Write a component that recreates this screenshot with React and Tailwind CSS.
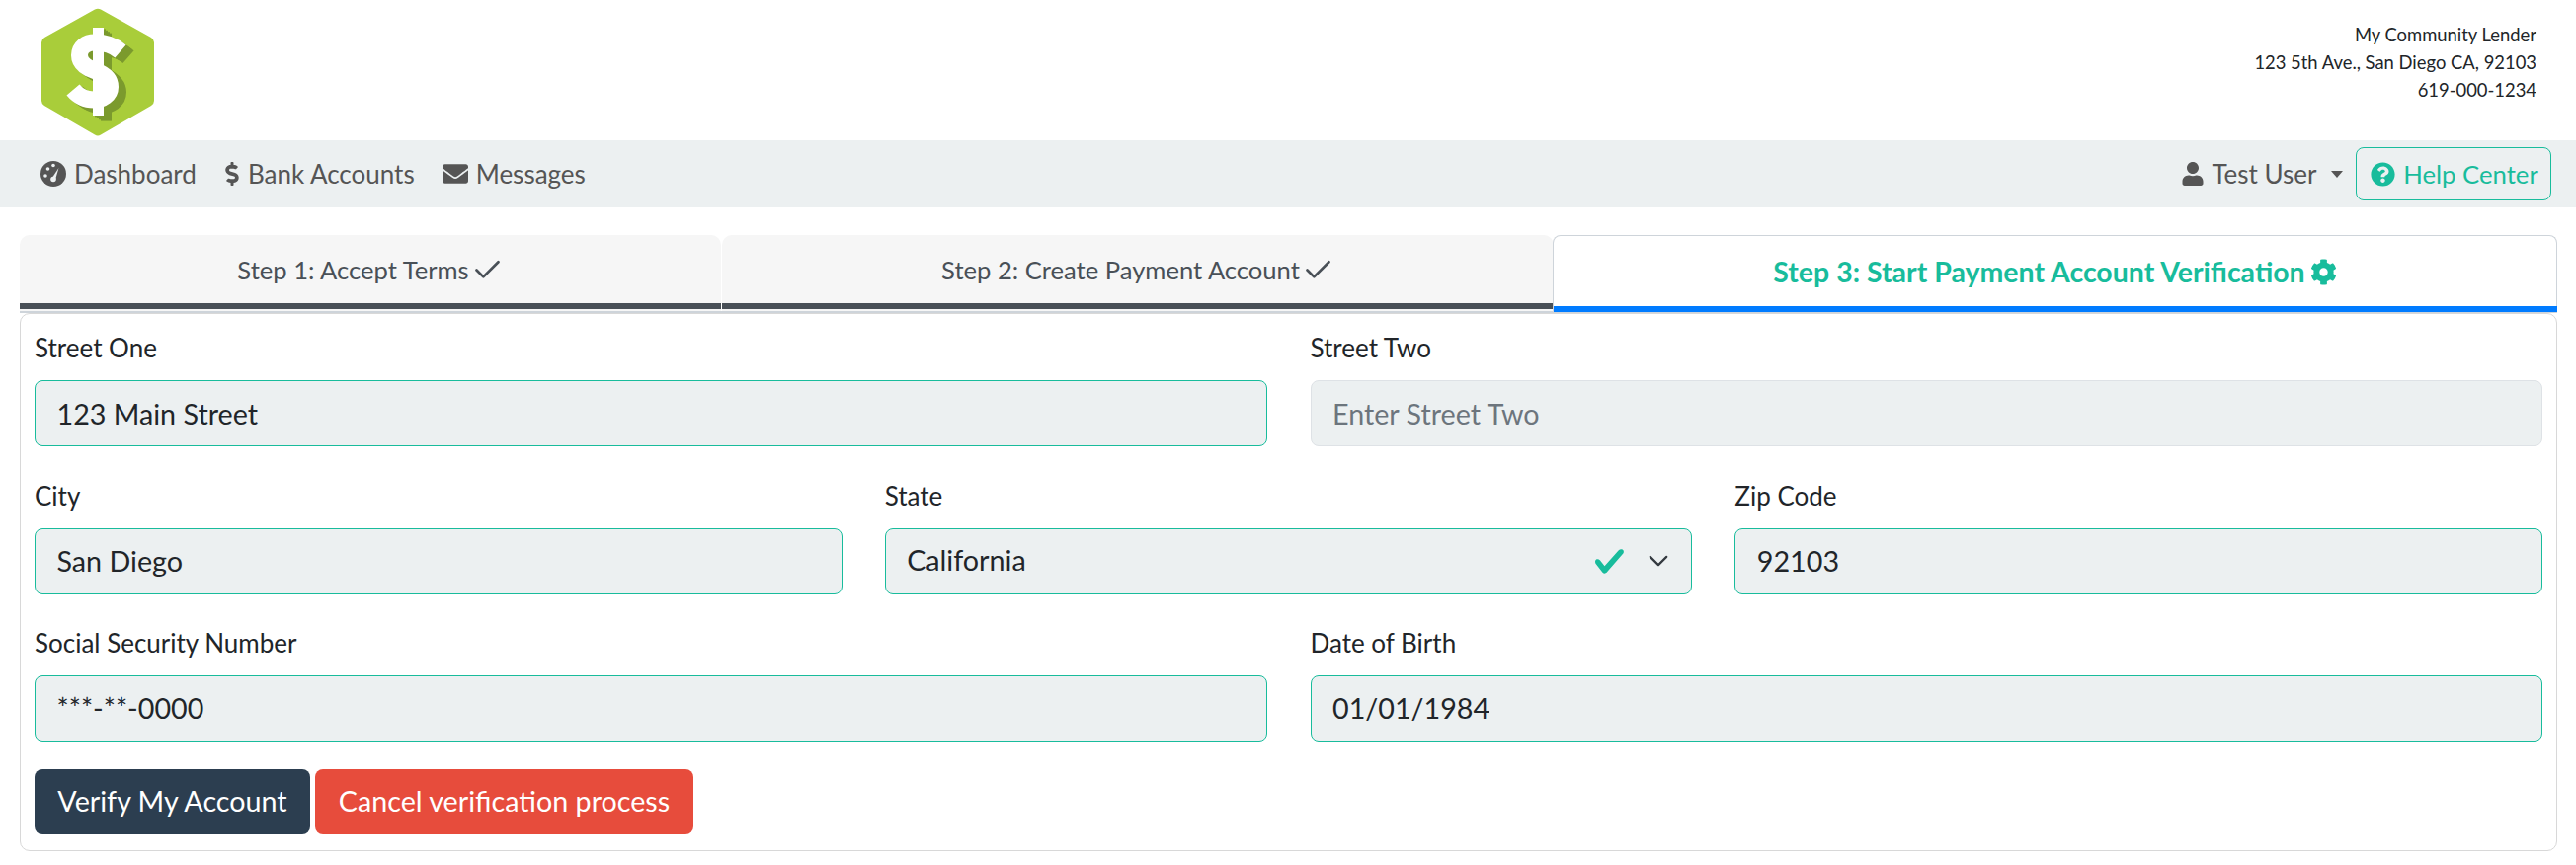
import React from "react";
import { FaDollarSign, FaEnvelope, FaUser, FaQuestionCircle, FaCog } from "react-icons/fa";
import { Check } from "lucide-react";

function Logo() {
  const s = "M122 52 C114 45 105 43 96 43 C87 43 80.5 48 80.5 56 C80.5 65 89 69 97 72 C105 75 111.5 79 111.5 88 C111.5 96 104 101 95 101 C86 101 79 97 74 91";
  const shadow = "#7b9a2d";
  return (
    <svg width="114" height="131" viewBox="42 8 114 131" className="block">
      <path d="M96 9.5 Q99 8 102 9.5 L153 38 Q156 40 156 43 L156 102 Q156 105 153 107 L102 136.5 Q99 138.5 96 136.5 L45 107 Q42 105 42 102 L42 43 Q42 40 45 38 Z" fill="#a9cd3a" />
      {[2, 4, 6, 8].map((d) => (
        <g key={d} transform={`translate(${d} ${d * 0.7})`}>
          <path d={s} fill="none" stroke={shadow} strokeWidth="17" />
          <rect x="94" y="28" width="11" height="89" fill={shadow} />
        </g>
      ))}
      <path d={s} fill="none" stroke="#fff" strokeWidth="17" />
      <rect x="94" y="28" width="11" height="89" fill="#fff" />
    </svg>
  );
}

function Gauge() {
  return (
    <svg width="26" height="26" viewBox="0 0 26 26" className="shrink-0">
      <circle cx="13" cy="13" r="13" fill="#555555" />
      <circle cx="7.5" cy="8" r="1.8" fill="#ecf0f1" />
      <circle cx="13" cy="4.5" r="1.8" fill="#ecf0f1" />
      <circle cx="5" cy="15" r="1.8" fill="#ecf0f1" />
      <path d="M11.5 17.5 L18.5 7 L15 19 Z" fill="#ecf0f1" />
      <circle cx="13" cy="18.5" r="2.8" fill="#ecf0f1" />
    </svg>
  );
}

function Field({ label, value, placeholder, valid = true }) {
  return (
    <div>
      <div className="h-[36px] leading-[36px] text-[26px] text-[#212529] mb-[15px]">{label}</div>
      <input
        readOnly
        value={value || ""}
        placeholder={placeholder}
        className={`block w-full h-[67px] rounded-[8px] border bg-[#ecf0f1] px-[21.5px] text-[28.7px] text-[#212529] placeholder:text-[#6c757d] outline-none ${valid ? "border-[#18bc9c]" : "border-[#dee2e6]"}`}
      />
    </div>
  );
}

function SelectField() {
  return (
    <div>
      <div className="h-[36px] leading-[36px] text-[26px] text-[#212529] mb-[15px]">State</div>
      <div className="flex items-center justify-between w-full h-[67px] rounded-[8px] border border-[#18bc9c] bg-[#ecf0f1] pl-[21.5px] pr-[22px] text-[28.7px] text-[#212529]">
        <span>California</span>
        <span className="flex items-center gap-[22px]">
          <svg width="33" height="33" viewBox="0 0 8 8"><path fill="#18bc9c" d="M2.3 6.73L.6 4.53c-.4-1.04.46-1.4 1.1-.8l1.1 1.4 3.4-3.8c.6-.63 1.6-.27 1.2.7l-4 4.6c-.43.5-.8.4-1.1.1z" /></svg>
          <svg width="22" height="22" viewBox="0 0 16 16"><path fill="none" stroke="#343a40" strokeWidth="1.6" strokeLinecap="round" strokeLinejoin="round" d="M2 5l6 6 6-6" /></svg>
        </span>
      </div>
    </div>
  );
}

function NavItem({ icon, children }) {
  return (
    <a className="flex items-center gap-[8px] text-[#555555] text-[26px]">
      {icon}
      <span>{children}</span>
    </a>
  );
}

function DoneTab({ className, children }) {
  return (
    <div className={`rounded-t-[10px] bg-[#f6f6f6] flex items-center justify-center gap-[2px] pb-[6px] relative text-[25.6px] text-[#495057] ${className}`}>
      <span>{children}</span><Check size={33} strokeWidth={2} className="shrink-0" />
      <div className="absolute left-0 right-0 bottom-[2px] h-[6px] bg-[#495057]" />
    </div>
  );
}

export default function App() {
  return (
    <div className="w-[2608px] h-[876px] bg-white overflow-hidden font-['Lato','Noto_Sans',sans-serif]">
      <header className="h-[142px] flex justify-between pl-[42px] pr-[40px]">
        <div className="pt-[8px]"><Logo /></div>
        <div className="pt-[21px] text-right text-[18.4px] leading-[28px] text-[#212529]">
          <div>My Community Lender</div>
          <div>123 5th Ave., San Diego CA, 92103</div>
          <div>619-000-1234</div>
        </div>
      </header>
      <nav className="h-[68px] bg-[#ecf0f1] flex items-center justify-between pl-[41px] pr-[25px]">
        <div className="flex items-center gap-[28px]">
          <NavItem icon={<Gauge />}>Dashboard</NavItem>
          <NavItem icon={<FaDollarSign size={24} className="-ml-[1px] -mr-[1px] w-[18px]" />}>Bank Accounts</NavItem>
          <NavItem icon={<FaEnvelope size={26} />}>Messages</NavItem>
        </div>
        <div className="flex items-center gap-[13px]">
          <a className="flex items-center text-[#555555] text-[26px]">
            <FaUser size={24} className="mr-[7px]" />
            <span>Test User</span>
            <span className="ml-[14.5px] w-0 h-0 border-x-[6.5px] border-x-transparent border-t-[7px] border-t-[#555555]" />
          </a>
          <a className="flex items-center justify-center gap-[8px] pl-[2px] w-[198px] h-[54px] rounded-[8px] border border-[#18bc9c] text-[#18bc9c] text-[25.7px]">
            <FaQuestionCircle size={25} />
            <span>Help Center</span>
          </a>
        </div>
      </nav>
      <main className="mt-[28px] mx-[20px] w-[2569px]">
        <div className="flex h-[79px] border-b-2 border-[#ced4da]">
          <DoneTab className="w-[710px]">Step 1: Accept Terms</DoneTab>
          <DoneTab className="w-[842px] ml-px -mr-px">Step 2: Create Payment Account</DoneTab>
          <div className="flex-1 relative flex items-center justify-center gap-[5px] pb-[3px] rounded-t-[8px] border-x border-t border-[#ced4da] bg-white text-[28.5px] font-bold text-[#18bc9c]">
            <span>Step 3: Start Payment Account Verification</span><FaCog size={27} className="shrink-0" />
            <div className="absolute -left-0 -right-px -bottom-px h-[6px] bg-[#007bff]" />
          </div>
        </div>
        <form className="h-[545px] rounded-[10px] border border-[#d8d8d8] px-[14px] pt-[16px]">
          <div className="grid grid-cols-2 gap-x-[44px] mb-[31.5px]">
            <Field label="Street One" value="123 Main Street" />
            <Field label="Street Two" placeholder="Enter Street Two" valid={false} />
          </div>
          <div className="grid grid-cols-3 gap-x-[43px] mb-[31px]">
            <Field label="City" value="San Diego" />
            <SelectField />
            <Field label="Zip Code" value="92103" />
          </div>
          <div className="grid grid-cols-2 gap-x-[44px] mb-[28.5px]">
            <Field label="Social Security Number" value="***-**-0000" />
            <Field label="Date of Birth" value="01/01/1984" />
          </div>
          <div className="flex gap-[5px]">
            <button type="button" className="w-[279px] h-[66px] rounded-[8px] bg-[#2c3e50] text-white text-[28.7px]">Verify My Account</button>
            <button type="button" className="w-[383px] h-[66px] rounded-[8px] bg-[#e74c3c] text-white text-[28.7px]">Cancel verification process</button>
          </div>
        </form>
      </main>
    </div>
  );
}
